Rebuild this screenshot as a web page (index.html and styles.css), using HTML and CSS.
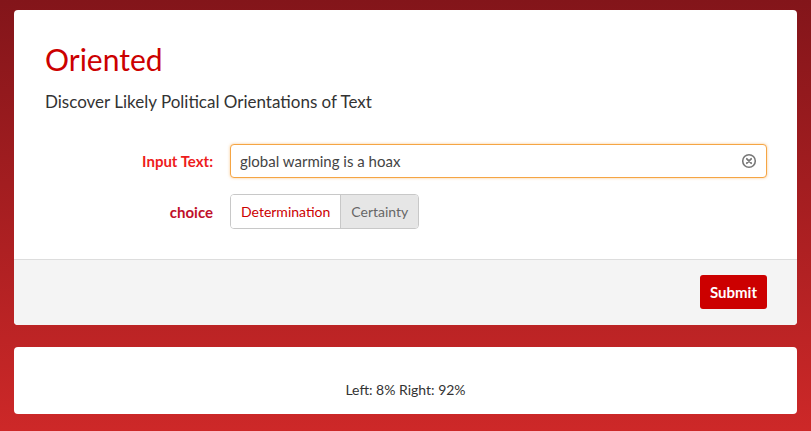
FILE: index.html
```html
<!DOCTYPE html>
<html lang="en">
<head>
  <meta charset="UTF-8" />
  <meta name="viewport" content="width=device-width, initial-scale=1" />
  <title>Oriented</title>
  <link rel="stylesheet" href="styles.css">
</head>
<body>
  <div class="page">
    <div class="card">
      <div class="card-body">
        <h1 class="title">Oriented</h1>
        <p class="subtitle">Discover Likely Political Orientations of Text</p>

        <div class="form-row">
          <label class="label label-input" for="text">Input Text:</label>
          <div class="input-wrap">
            <input type="text" id="text" class="text-input" value="global warming is a hoax" />
            <span class="clear-btn">
              <svg width="16" height="16" viewBox="0 0 16 16">
                <circle cx="8" cy="8" r="6.3" fill="none" stroke="#777" stroke-width="1.6" />
                <path d="M5.8 5.8 L10.2 10.2 M10.2 5.8 L5.8 10.2" stroke="#777" stroke-width="1.8" stroke-linecap="round" />
              </svg>
            </span>
          </div>
        </div>

        <div class="form-row">
          <span class="label label-choice">choice</span>
          <div class="segmented">
            <button class="seg">Determination</button>
            <button class="seg active">Certainty</button>
          </div>
        </div>
      </div>
      <div class="card-footer">
        <button class="submit">Submit</button>
      </div>
    </div>

    <div class="card result">
      Left: 8% Right: 92%
    </div>
  </div>
</body>
</html>
```

FILE: styles.css
```css
html, body {
  height: 100%;
}

body {
  margin: 0;
  background: linear-gradient(#83151a, #cd2828);
  font-family: Lato, "Noto Sans", sans-serif;
  color: #333;
}

.page {
  padding: 10px 14px;
}

.card {
  background: #fff;
  border-radius: 4px;
  overflow: hidden;
}

.card-body {
  padding: 30px 30px 30px 31px;
}

.title {
  margin: 0;
  font-size: 30px;
  font-weight: normal;
  line-height: 38px;
  color: #cc0000;
}

.subtitle {
  margin: 13px 0 31px;
  font-size: 17px;
  line-height: 22px;
  color: #333;
}

.form-row {
  display: flex;
  align-items: center;
  margin-bottom: 16px;
}

.form-row:last-child {
  margin-bottom: 0;
}

.label {
  width: 168px;
  padding-right: 17px;
  text-align: right;
  font-weight: bold;
  font-size: 15px;
}

.label-input {
  color: #ee1c1c;
}

.label-choice {
  color: #c0102a;
}

.input-wrap {
  flex: 1;
  position: relative;
}

.text-input {
  width: 100%;
  height: 34px;
  box-sizing: border-box;
  padding: 0 34px 0 9px;
  border: 1px solid #f5a544;
  border-radius: 4px;
  box-shadow: 0 0 3px rgba(245, 165, 68, 0.6);
  font-family: inherit;
  font-size: 15px;
  color: #444;
  outline: none;
}

.clear-btn {
  position: absolute;
  right: 10px;
  top: 9px;
  line-height: 0;
}

.segmented {
  display: flex;
  border: 1px solid #c8c8c8;
  border-radius: 4px;
  overflow: hidden;
}

.seg {
  height: 33px;
  padding: 0 10px;
  border: none;
  background: #fff;
  font-family: inherit;
  font-size: 14px;
  color: #cc0000;
}

.seg.active {
  background: #e6e6e6;
  color: #666;
  border-left: 1px solid #c8c8c8;
}

.card-footer {
  display: flex;
  justify-content: flex-end;
  padding: 15px 30px 16px;
  background: #f4f4f4;
  border-top: 1px solid #ddd;
}

.submit {
  height: 34px;
  padding: 0 10px;
  border: none;
  border-radius: 3px;
  background: #cc0000;
  color: #fff;
  font-family: inherit;
  font-weight: bold;
  font-size: 15px;
}

.result {
  margin-top: 22px;
  height: 67px;
  box-sizing: border-box;
  padding-top: 34px;
  text-align: center;
  font-size: 14px;
}
```
